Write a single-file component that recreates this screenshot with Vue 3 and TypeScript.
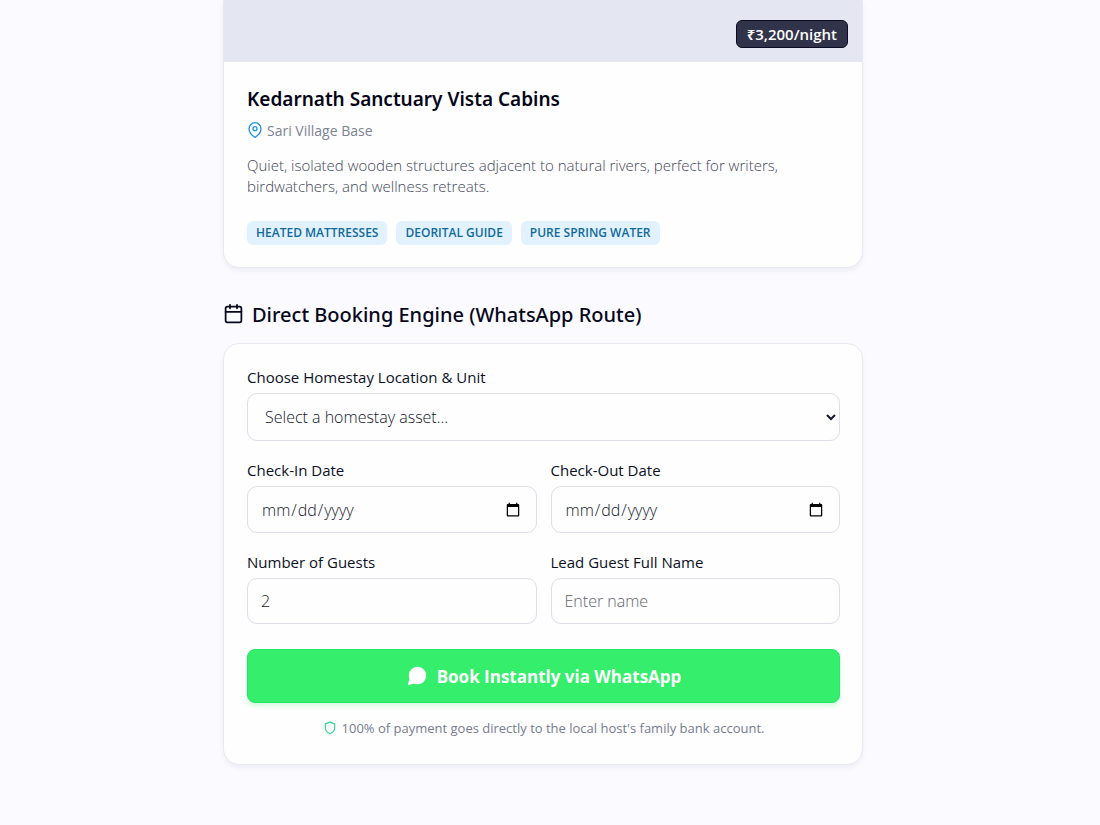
<script setup lang="ts">
import { ref } from 'vue'

const tags: string[] = ['HEATED MATTRESSES', 'DEORITAL GUIDE', 'PURE SPRING WATER']
const homestays: string[] = ['Kedarnath Sanctuary Vista Cabins']

const homestay = ref('')
const checkIn = ref('')
const checkOut = ref('')
const guests = ref(2)
const guestName = ref('')
</script>

<template>
  <main class="page">
    <div class="column">
      <article class="card stay">
        <div class="photo">
          <span class="price">₹3,200/night</span>
        </div>
        <div class="stay-body">
          <h3 class="stay-title">Kedarnath Sanctuary Vista Cabins</h3>
          <p class="location">
            <svg class="pin" viewBox="0 0 24 24" aria-hidden="true">
              <path d="M21 10c0 7-9 13-9 13s-9-6-9-13a9 9 0 0 1 18 0Z" />
              <circle cx="12" cy="10" r="3" />
            </svg>
            <span>Sari Village Base</span>
          </p>
          <p class="description">
            Quiet, isolated wooden structures adjacent to natural rivers, perfect for writers, birdwatchers, and wellness retreats.
          </p>
          <ul class="tags">
            <li v-for="tag in tags" :key="tag" class="tag">{{ tag }}</li>
          </ul>
        </div>
      </article>

      <h2 class="heading">
        <svg class="calendar" viewBox="0 0 24 24" aria-hidden="true">
          <rect x="3" y="4" width="18" height="18" rx="2" />
          <path d="M16 2v4M8 2v4M3 10h18" />
        </svg>
        <span>Direct Booking Engine (WhatsApp Route)</span>
      </h2>

      <form class="card booking" @submit.prevent>
        <div class="field">
          <label for="homestay">Choose Homestay Location &amp; Unit</label>
          <select id="homestay" v-model="homestay" class="control">
            <option value="">Select a homestay asset...</option>
            <option v-for="name in homestays" :key="name" :value="name">{{ name }}</option>
          </select>
        </div>
        <div class="row">
          <div class="field">
            <label for="check-in">Check-In Date</label>
            <input id="check-in" v-model="checkIn" class="control date" type="date" />
          </div>
          <div class="field">
            <label for="check-out">Check-Out Date</label>
            <input id="check-out" v-model="checkOut" class="control date" type="date" />
          </div>
        </div>
        <div class="row">
          <div class="field">
            <label for="guests">Number of Guests</label>
            <input id="guests" v-model="guests" class="control short" type="number" min="1" />
          </div>
          <div class="field">
            <label for="guest-name">Lead Guest Full Name</label>
            <input id="guest-name" v-model="guestName" class="control short" type="text" placeholder="Enter name" />
          </div>
        </div>
        <div class="actions">
          <button class="book" type="submit">
            <svg class="bubble" viewBox="0 0 24 24" aria-hidden="true">
              <path d="M21 11.500a8.380 8.380 0 0 1-.9 3.800 8.500 8.500 0 0 1-7.600 4.700 8.380 8.380 0 0 1-3.800-.9L3 21l1.900-5.700a8.380 8.380 0 0 1-.9-3.800 8.500 8.500 0 0 1 4.700-7.600 8.380 8.380 0 0 1 3.800-.9h.5a8.480 8.480 0 0 1 8 8v.5Z" />
            </svg>
            <span>Book Instantly via WhatsApp</span>
          </button>
          <p class="note">
            <svg class="shield" viewBox="0 0 24 24" aria-hidden="true">
              <path d="M12 22s8-4 8-10V5l-8-3-8 3v7c0 6 8 10 8 10Z" />
            </svg>
            <span>100% of payment goes directly to the local host's family bank account.</span>
          </p>
        </div>
      </form>
    </div>
  </main>
</template>

<style>
html,
body {
  margin: 0;
  background: #fafaff;
}
</style>

<style scoped>
.page {
  box-sizing: border-box;
  min-height: 100vh;
  padding: 0 14px 60px 0;
  background: #fafaff;
  color: #0b1026;
  font-family: "Open Sans", "Noto Sans", sans-serif;
}
.column {
  max-width: 640px;
  margin: 0 auto;
}
h2,
h3,
p,
ul {
  margin: 0;
  padding: 0;
}
svg {
  flex: none;
  fill: none;
  stroke: currentColor;
  stroke-width: 2;
  stroke-linecap: round;
  stroke-linejoin: round;
}
.card {
  box-sizing: border-box;
  background: #fefefe;
  border: 1px solid #e9e9f4;
  border-radius: 16px;
  box-shadow: 0 3px 5px rgba(20, 20, 60, 0.05);
}
.stay {
  border-top: 0;
  border-radius: 0 0 16px 16px;
}
.photo {
  display: flex;
  justify-content: flex-end;
  align-items: flex-end;
  box-sizing: border-box;
  height: 62px;
  padding: 14px;
  background: #e4e6f1;
}
.price {
  padding: 4px 10px;
  border: 1px solid #0b0c24;
  border-radius: 6px;
  background: #31334a;
  color: #fff;
  font-size: 15px;
  font-weight: 600;
  line-height: 18px;
}
.stay-body {
  padding: 23px 23px 22px;
}
.stay-title {
  color: #050618;
  font-family: "Noto Sans", "Open Sans", sans-serif;
  font-size: 19px;
  font-weight: 600;
  line-height: 28px;
}
.location {
  display: flex;
  align-items: flex-start;
  gap: 4px;
  margin-top: 8px;
  color: #7d8294;
  font-size: 14px;
  line-height: 20px;
}
.pin {
  width: 16px;
  height: 16px;
  margin-top: 1px;
  color: #1f95dc;
}
.description {
  margin-top: 14px;
  color: #3f465a;
  font-size: 15px;
  font-weight: 300;
  line-height: 21px;
}
.tags {
  display: flex;
  flex-wrap: wrap;
  gap: 9px;
  margin-top: 24px;
  list-style: none;
}
.tag {
  padding: 0 9px;
  border-radius: 6px;
  background: #e1f2fe;
  color: #11699b;
  font-size: 12px;
  font-weight: 600;
  line-height: 24px;
}
.heading {
  display: flex;
  align-items: flex-start;
  gap: 8px;
  margin: 33px 0 14px;
  color: #07081c;
  font-family: "Noto Sans", "Open Sans", sans-serif;
  font-size: 20px;
  font-weight: 500;
  line-height: 28px;
}
.calendar {
  width: 21px;
  height: 21px;
  margin-top: 2px;
}
.booking {
  display: flex;
  flex-direction: column;
  gap: 19px;
  padding: 23px 22px 26px 23px;
}
.row {
  display: grid;
  grid-template-columns: 1fr 1fr;
  gap: 14px;
}
.field {
  display: flex;
  flex-direction: column;
  gap: 6px;
  min-width: 0;
}
label {
  font-size: 15px;
  line-height: 20px;
}
.control {
  box-sizing: border-box;
  width: 100%;
  height: 48px;
  padding: 0 13px;
  border: 1px solid #dcdfe9;
  border-radius: 10px;
  background: #fefefe;
  color: #14172a;
  font-family: inherit;
  font-size: 16px;
  font-weight: 300;
}
select.control {
  padding: 0 0 0 13px;
}
.date {
  height: 47px;
}
.short {
  height: 46px;
}
.control::placeholder {
  color: #62656f;
}
.actions {
  display: flex;
  flex-direction: column;
  gap: 15px;
  margin-top: 6px;
}
.book {
  display: flex;
  align-items: center;
  justify-content: center;
  gap: 9px;
  height: 54px;
  border: 1px solid #25e766;
  border-radius: 8px;
  background: #35ee6c;
  box-shadow: 0 3px 5px rgba(37, 231, 102, 0.2);
  color: #fff;
  font-family: inherit;
  font-size: 17px;
  font-weight: 700;
}
.bubble {
  width: 22px;
  height: 22px;
  fill: currentColor;
}
.note {
  display: flex;
  align-items: center;
  justify-content: center;
  gap: 5px;
  color: #767b8f;
  font-size: 13px;
  line-height: 20px;
}
.shield {
  width: 14px;
  height: 14px;
  color: #2fd394;
}
</style>
